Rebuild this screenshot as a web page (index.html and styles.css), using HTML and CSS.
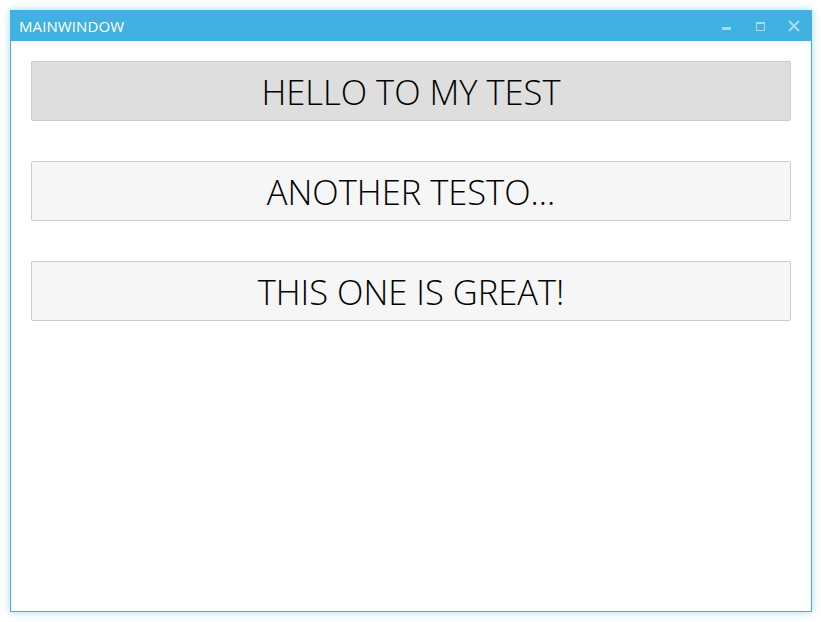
FILE: index.html
```html
<!DOCTYPE html>
<html>
<head>
<meta charset="utf-8">
<link rel="stylesheet" href="styles.css">
</head>
<body>
<div class="window">
  <div class="titlebar">
    <span class="title">MAINWINDOW</span>
    <div class="controls">
      <svg class="ctl min" width="12" height="12" viewBox="0 0 12 12"><rect x="1" y="7" width="9" height="3" fill="#a6dbf2"/></svg>
      <svg class="ctl max" width="12" height="12" viewBox="0 0 12 12"><rect x="1.5" y="2.5" width="8" height="8" fill="none" stroke="#a6dbf2" stroke-width="1"/><rect x="1" y="2" width="9" height="2" fill="#a6dbf2"/></svg>
      <svg class="ctl close" width="12" height="12" viewBox="0 0 12 12"><path d="M1 1 L11 11 M11 1 L1 11" stroke="#a6dbf2" stroke-width="2"/></svg>
    </div>
  </div>
  <div class="content">
    <button class="btn hover">HELLO TO MY TEST</button>
    <button class="btn">ANOTHER TESTO...</button>
    <button class="btn">THIS ONE IS GREAT!</button>
  </div>
</div>
</body>
</html>
```
FILE: styles.css
```css
html, body {
  margin: 0;
  padding: 0;
  background: #ffffff;
}
body {
  padding: 10px;
}
.window {
  width: 800px;
  height: 600px;
  border: 1px solid #41b1e1;
  box-shadow: 0 0 8px rgba(65, 177, 225, 0.45);
  background: #ffffff;
  display: flex;
  flex-direction: column;
}
.titlebar {
  height: 30px;
  margin: -1px -1px 0 -1px;
  padding-top: 1px;
  background: #41b1e1;
  display: flex;
  align-items: center;
  justify-content: space-between;
  padding-left: 9px;
}
.title {
  font-family: "Open Sans", sans-serif;
  font-size: 15px;
  color: #ffffff;
  letter-spacing: 0.1px;
}
.controls {
  display: flex;
  align-items: center;
  padding-right: 12px;
}
.ctl {
  display: block;
}
.ctl.max {
  margin-left: 22px;
}
.ctl.close {
  margin-left: 21px;
}
.content {
  padding: 20px;
  display: flex;
  flex-direction: column;
  gap: 40px;
}
.btn {
  height: 60px;
  width: 100%;
  border: 1px solid #cccccc;
  border-radius: 2px;
  background: #f6f6f6;
  font-family: "Open Sans", sans-serif;
  font-weight: 300;
  font-size: 34.5px;
  color: #000000;
  padding: 2px 0 0 0;
  line-height: 56px;
}
.btn.hover {
  background: #dedede;
}
```
